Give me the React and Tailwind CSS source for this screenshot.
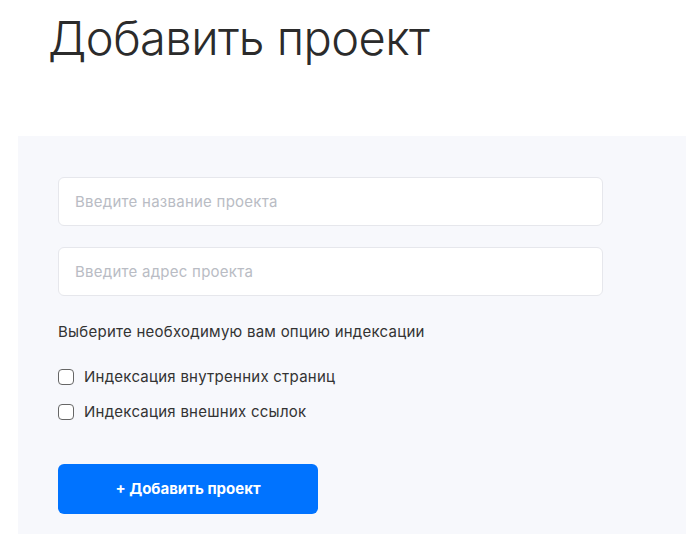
export default function App() {
    return (
        <div className="min-h-[534px] bg-white text-[#333] font-['Inter',sans-serif]">
            <h1 className="pl-[48px] pt-[8px] text-[47px] leading-[60px] font-light text-[#2b2b2b] tracking-[-0.55px]">
                Добавить проект
            </h1>

            <div className="ml-[18px] mt-[68px] bg-[#f7f8fc] pl-[40px] pt-[41px] pb-[20px] min-h-[398px]">
                <form className="w-[545px] tracking-[0.25px]" onSubmit={(e) => e.preventDefault()}>
                    <input
                        type="text"
                        placeholder="Введите название проекта"
                        className="block w-full h-[49px] px-[16px] rounded-[6px] bg-white border border-[#e6e7ec] text-[15px] tracking-[0.25px] placeholder:text-[#b9bcc4] outline-none"
                    />
                    <input
                        type="text"
                        placeholder="Введите адрес проекта"
                        className="block w-full h-[49px] px-[16px] mt-[21px] rounded-[6px] bg-white border border-[#e6e7ec] text-[15px] tracking-[0.25px] placeholder:text-[#b9bcc4] outline-none"
                    />

                    <p className="mt-[24px] text-[15px] leading-[24px] text-[#333]">
                        Выберите необходимую вам опцию индексации
                    </p>

                    <label className="mt-[21px] flex items-center gap-[10px] text-[15px] leading-[24px]">
                        <span className="w-[16px] h-[16px] rounded-[4px] border border-[#666] bg-white" />
                        Индексация внутренних страниц
                    </label>
                    <label className="mt-[11px] flex items-center gap-[10px] text-[15px] leading-[24px]">
                        <span className="w-[16px] h-[16px] rounded-[4px] border border-[#666] bg-white" />
                        Индексация внешних ссылок
                    </label>

                    <button
                        type="submit"
                        className="mt-[40px] w-[260px] h-[50px] rounded-[6px] bg-[#0073ff] text-white font-bold text-[15px] tracking-normal"
                    >
                        + Добавить проект
                    </button>
                </form>
            </div>
        </div>
    )
}
